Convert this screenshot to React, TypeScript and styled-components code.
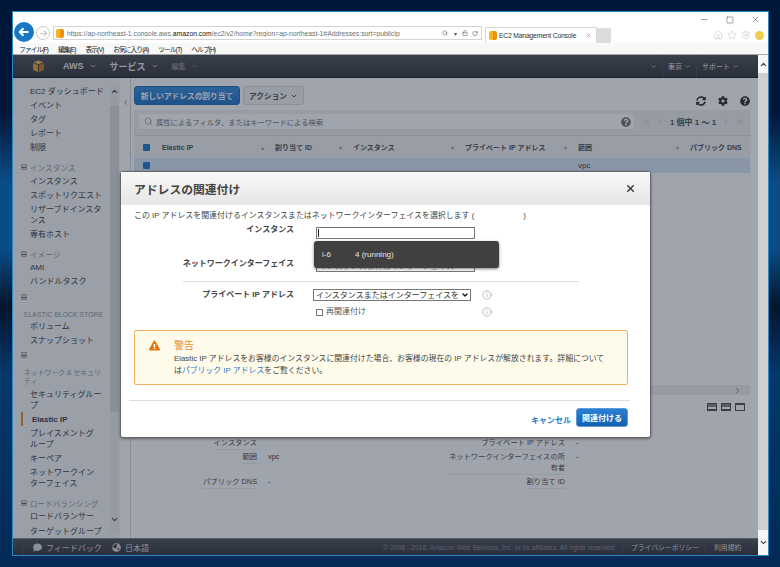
import React from 'react';
import styled, { createGlobalStyle } from 'styled-components';
import { FaCog, FaComment, FaExclamationTriangle, FaGlobeAsia, FaQuestionCircle, FaSyncAlt } from 'react-icons/fa';
import { ChevronDown, ChevronLeft, ChevronRight, ChevronUp, ChevronsLeft, ChevronsRight, Home, Info, Lock, Minus, RotateCw, Search, Settings, Square, Star, X } from 'lucide-react';

const GlobalStyle = createGlobalStyle`
  html, body { margin: 0; padding: 0; width: 780px; height: 567px; overflow: hidden; }
  * { box-sizing: border-box; }
  body { font-family: "Liberation Sans", "Noto Sans CJK JP", sans-serif; font-size: 8px; color: #444; }
`;

const Desktop = styled.div`
  width: 780px;
  height: 567px;
  padding: 12px 12px 12px 13px;
  background: linear-gradient(#02183a 0%, #02183a 20%, #0a4c86 32%, #0a4c86 44%, #04152c 54%, #05386c 66%, #012a55 100%);
`;

const BrowserWindow = styled.div`
  width: 755px;
  height: 543px;
  display: flex;
  flex-direction: column;
  background: #fff;
  box-shadow: 0 0 0 1px #2b86c5;
`;

const ChromeTop = styled.div`
  height: 31px;
  display: flex;
  align-items: flex-end;
  background: #fff;
  flex-shrink: 0;
`;

const BackButton = styled.div`
  width: 20px;
  height: 20px;
  margin: 0 0 0 1px;
  position: relative;
  top: -1px;
  border-radius: 50%;
  background: #1a78c2;
  color: #fff;
  display: flex;
  align-items: center;
  justify-content: center;
`;

const ForwardButton = styled.div`
  width: 14px;
  height: 14px;
  margin: 0 3px 3px 2px;
  border-radius: 50%;
  border: 1px solid #c8c8c8;
  color: #c4c4c4;
  display: flex;
  align-items: center;
  justify-content: center;
`;

const AddressBar = styled.div`
  width: 429px;
  height: 14px;
  margin-bottom: 3px;
  padding: 0 3px 0 2px;
  display: flex;
  align-items: center;
  gap: 3px;
  border: 1px solid #d4d4d4;
  color: #555;
`;

const Url = styled.div`
  flex: 1;
  font-size: 6.8px;
  white-space: nowrap;
  overflow: hidden;
  color: #6f6f6f;
  b { font-weight: 400; color: #111; }
`;

const AddressTool = styled.span`
  width: 6px;
  margin-left: 1px;
  display: flex;
  align-items: center;
  justify-content: center;
  color: #555;
  font-size: 6px;
`;

const Favicon = styled.span`
  width: 8px;
  height: 9px;
  flex-shrink: 0;
  border-radius: 2px;
  background: linear-gradient(90deg, #f7b21e 50%, #e8920f 50%);
`;

const Tab = styled.div`
  width: 112px;
  height: 16px;
  margin-left: 3px;
  padding: 0 4px 0 3px;
  display: flex;
  align-items: center;
  gap: 2px;
  border: 1px solid #d8d8d8;
  border-bottom: none;
  color: #333;
  font-size: 6.8px;
  letter-spacing: -0.2px;
`;

const TabTitle = styled.span`
  flex: 1;
  white-space: nowrap;
`;

const NewTab = styled.div`
  width: 14px;
  height: 15px;
  background: #dcdcdc;
`;

const ChromeRight = styled.div`
  flex: 1;
  align-self: stretch;
  display: flex;
  flex-direction: column;
  align-items: flex-end;
  justify-content: space-between;
  padding: 3px 4px 3px 0;
`;

const WindowControls = styled.div`
  display: flex;
  align-items: center;
  gap: 17px;
  padding-right: 4px;
  color: #222;
`;

const BrowserIcons = styled.div`
  display: flex;
  align-items: center;
  gap: 4px;
  color: #aab0b6;
`;

const Smiley = styled.span`
  width: 9px;
  height: 9px;
  border-radius: 50%;
  background: #f2cc4a;
`;

const MenuBar = styled.div`
  height: 12px;
  flex-shrink: 0;
  display: flex;
  align-items: center;
  gap: 10px;
  padding-left: 6px;
  font-size: 6.8px;
  letter-spacing: -1px;
  color: #222;
  background: #f8f8f8;
  border-bottom: 1px solid #a8a8a8;
`;

const AppRow = styled.div`
  flex: 1;
  min-height: 0;
  display: flex;
`;

const AppArea = styled.div`
  position: relative;
  width: 745px;
  display: flex;
  flex-direction: column;
`;

const PageScroll = styled.div`
  flex: 1;
  display: flex;
  flex-direction: column;
  justify-content: space-between;
  align-items: center;
  background: #d0d0d0;
  color: #444;
`;

const ScrollArrow = styled.div<{ $height: number }>`
  width: 100%;
  height: ${p => p.$height}px;
  display: flex;
  align-items: center;
  justify-content: center;
  background: #f6f6f6;
`;

const NavBar = styled.div`
  height: 23px;
  flex-shrink: 0;
  padding-right: 14px;
  display: flex;
  align-items: center;
  color: #ddd;
  background: linear-gradient(#55585e, #3a3c42);
  border-bottom: 1px solid #222;
`;

const NavLogo = styled.div`
  width: 37px;
  padding-left: 19px;
  display: flex;
`;

const NavItem = styled.div<{ $dim?: boolean; $size?: number }>`
  display: flex;
  align-items: center;
  gap: 5px;
  height: 23px;
  padding-left: 13px;
  font-size: ${p => p.$size || 9}px;
  font-weight: 700;
  color: ${p => (p.$dim ? '#8c8f96' : '#e8e8e8')};
`;

const NavSpacer = styled.div`
  flex: 1;
`;

const NavRightItem = styled(NavItem)<{ $plain?: boolean }>`
  font-weight: 400;
  padding-left: 5px;
  padding-right: 5px;
  gap: 2px;
  font-size: 7px;
  border-left: ${p => (p.$plain ? 'none' : '1px solid #4c4f56')};
`;

const ContentRow = styled.div`
  flex: 1;
  min-height: 0;
  display: flex;
  background: #f6f6f6;
`;

const Sidebar = styled.div`
  width: 107px;
  flex-shrink: 0;
  display: flex;
  position: relative;
  background: #f6f7f8;
  overflow: hidden;
`;

const SideNav = styled.div`
  width: 97px;
  padding: 6px 0 0 0;
  flex-shrink: 0;
`;

const SideItem = styled.div<{ $active?: boolean }>`
  margin-left: ${p => (p.$active ? '8px' : '17px')};
  padding: 1.6px 0 1.6px ${p => (p.$active ? '9px' : '0')};
  width: ${p => (p.$active ? '86px' : '75px')};
  line-height: 11px;
  font-weight: ${p => (p.$active ? 700 : 400)};
  color: #444;
  border-left: ${p => (p.$active ? '2px solid #e8912d' : 'none')};
`;

const SideHead = styled.div<{ $bare?: boolean }>`
  margin: ${p => (p.$bare ? '3px' : '6px')} 0 0 8px;
  height: ${p => (p.$bare ? '10px' : '13px')};
  display: flex;
  align-items: center;
  gap: 3px;
  color: #999;
  font-size: 7.6px;
`;

const SideBlockLabel = styled.div`
  margin: 7.5px 0 0 11px;
  width: 80px;
  line-height: 9.5px;
  color: #999;
  font-size: 6.85px;
`;

const Collapse = styled.span`
  width: 6px;
  height: 6px;
  flex-shrink: 0;
  border: 1px solid #aaa;
  border-radius: 1px;
  background: #ddd;
  display: flex;
  align-items: center;
  justify-content: center;
  &::after { content: ''; width: 4px; height: 1px; background: #666; }
`;

const SideTrack = styled.div`
  width: 9px;
  margin-top: 9px;
  height: 445px;
  display: flex;
  flex-direction: column;
  background: #eee;
  color: #555;
`;

const SideThumb = styled.div`
  height: 306px;
  margin-top: 9px;
  background: #dcdcde;
`;

const SideTrackEnd = styled.div`
  margin-top: auto;
  margin-bottom: 8px;
  height: 9px;
  display: flex;
  justify-content: center;
`;

const SideTrackStart = styled.div`
  height: 10px;
  display: flex;
  justify-content: center;
`;

const Main = styled.div`
  flex: 1;
  min-width: 0;
  display: flex;
  background: #fff;
`;

const CollapseRail = styled.div`
  width: 11px;
  flex-shrink: 0;
  padding-top: 21px;
  background: #fff;
  border-right: 1px solid #d8d8d8;
  color: #777;
  display: flex;
  justify-content: center;
  align-items: flex-start;
`;

const MainColumn = styled.div`
  flex: 1;
  min-width: 0;
  overflow: hidden;
  padding: 8px 8px 0 3px;
  display: flex;
  flex-direction: column;
`;

const Toolbar = styled.div`
  height: 19px;
  flex-shrink: 0;
  display: flex;
  align-items: center;
  gap: 3px;
`;

const PrimaryButton = styled.button`
  width: 106px;
  height: 19px;
  padding: 0;
  border: 1px solid #2a74c0;
  border-radius: 3px;
  background: linear-gradient(#3b92e0, #2a76c8);
  color: #fff;
  font: 700 7.7px "Liberation Sans", "Noto Sans CJK JP", sans-serif;
`;

const ActionButton = styled.button`
  width: 61px;
  height: 19px;
  padding: 0;
  display: flex;
  align-items: center;
  justify-content: center;
  gap: 3px;
  border: 1px solid #ddd;
  border-radius: 3px;
  background: #f4f4f4;
  color: #555;
  font: 700 7.7px "Liberation Sans", "Noto Sans CJK JP", sans-serif;
`;

const ToolIcons = styled.div`
  margin-left: auto;
  display: flex;
  align-items: center;
  gap: 12px;
  padding-top: 10px;
  color: #333;
`;

const FilterBar = styled.div`
  height: 25px;
  flex-shrink: 0;
  margin-top: 5px;
  padding: 4px 0 0 5px;
  display: flex;
  align-items: flex-start;
  background: #f0f0f0;
`;

const FilterInput = styled.div`
  width: 495px;
  height: 15px;
  padding: 0 3px 0 5px;
  display: flex;
  align-items: center;
  gap: 3px;
  font-size: 7.3px;
  background: #fff;
  color: #777;
  border-radius: 2px;
`;

const FilterHelp = styled.span`
  margin-left: auto;
  display: flex;
  color: #777;
`;

const Pager = styled.div`
  flex: 1;
  height: 15px;
  display: flex;
  align-items: center;
  justify-content: space-between;
  padding: 0 6px 0 8px;
  font-weight: 700;
  color: #555;
`;

const PagerArrow = styled.span`
  display: flex;
  color: #bbb;
`;

const TableHead = styled.div`
  height: 23px;
  flex-shrink: 0;
  display: flex;
  align-items: center;
  background: #f4f4f4;
  border-top: 1px solid #ddd;
  font-size: 7px;
  font-weight: 700;
  color: #555;
`;

const HeadCell = styled.div<{ $width: number; $mark?: string }>`
  width: ${p => p.$width}px;
  flex-shrink: 0;
  height: 23px;
  padding: 0 7px 0 4px;
  display: flex;
  align-items: center;
  justify-content: space-between;
  white-space: nowrap;
  &::after { content: '${p => p.$mark ?? '▾'}'; font-size: 6px; color: #999; font-weight: 400; }
`;

const CheckCell = styled.div`
  width: 24px;
  flex-shrink: 0;
  display: flex;
  justify-content: center;
`;

const BlueCheck = styled.span`
  width: 7px;
  height: 7px;
  border-radius: 1px;
  background: #2c7cd0;
`;

const TableRow = styled.div`
  height: 15px;
  flex-shrink: 0;
  display: flex;
  align-items: center;
  background: #d9e8f7;
`;

const RowCell = styled.div`
  margin-left: 420px;
  color: #444;
`;

const TableBody = styled.div`
  height: 212px;
  flex-shrink: 0;
  background: #fff;
`;

const HScroll = styled.div`
  height: 10px;
  flex-shrink: 0;
  padding-right: 8px;
  display: flex;
  justify-content: flex-end;
  align-items: center;
  background: #eee;
  color: #666;
`;

const PanelButtons = styled.div`
  height: 41px;
  flex-shrink: 0;
  padding: 8px 5px 0 0;
  display: flex;
  justify-content: flex-end;
  align-items: flex-start;
  gap: 4px;
`;

const PanelIcon = styled.span<{ $top?: boolean }>`
  width: 10px;
  height: 8px;
  border: 1px solid #555;
  ${p => (p.$top
    ? 'border-top-width: 2px; background: #fff;'
    : 'border-bottom-width: 2px; background: linear-gradient(#888 55%, #fff 55%);')}
`;

const DetailGrid = styled.div`
  display: grid;
  grid-template-columns: 123px 166px 120px 1fr;
  column-gap: 11px;
  align-items: start;
  font-size: 7.3px;
`;

const DetailLabel = styled.div`
  justify-self: end;
  text-align: right;
  line-height: 11px;
  padding: 1px 0;
  color: #555;
  border-bottom: 1px solid #eee;
`;

const DetailValue = styled.div`
  line-height: 13px;
  color: #444;
`;

const Footer = styled.div`
  height: 17px;
  flex-shrink: 0;
  padding: 0 12px 0 10px;
  display: flex;
  align-items: center;
  color: #ddd;
  background: linear-gradient(#55585e, #3a3c42);
  border-top: 1px solid #888;
`;

const FooterItem = styled.div<{ $width: number; $pad?: number; $size?: number }>`
  width: ${p => p.$width}px;
  flex-shrink: 0;
  height: 100%;
  padding-left: ${p => p.$pad ?? 7}px;
  display: flex;
  align-items: center;
  gap: 4px;
  white-space: nowrap;
  font-size: ${p => p.$size || 8}px;
  border-left: 1px solid #4c4f56;
  border-right: 1px solid #4c4f56;
  margin-right: -1px;
`;

const Copyright = styled.div`
  flex: 1;
  text-align: right;
  padding-right: 7px;
  font-size: 6.8px;
  white-space: nowrap;
  color: #8d9096;
`;

const Scrim = styled.div`
  position: absolute;
  inset: 0;
  background: rgba(17, 27, 47, 0.4);
`;

const Modal = styled.div`
  position: absolute;
  left: 107px;
  top: 116px;
  width: 531px;
  height: 267px;
  display: flex;
  flex-direction: column;
  background: #fff;
  border: 1px solid #666;
  border-radius: 3px;
  box-shadow: 0 1px 3px rgba(0, 0, 0, 0.4);
`;

const ModalHeader = styled.div`
  height: 33px;
  flex-shrink: 0;
  padding: 0 14px 0 13px;
  display: flex;
  align-items: center;
  justify-content: space-between;
  background: linear-gradient(#f8f8f8, #e6e6e6);
  color: #333;
`;

const ModalTitle = styled.h2`
  margin: 0;
  font-size: 11.8px;
  font-weight: 700;
  color: #444;
`;

const ModalBody = styled.div`
  padding: 5px 22px 0 13px;
`;

const IntroLine = styled.div`
  line-height: 12px;
  font-size: 7.93px;
  color: #444;
  white-space: nowrap;
`;

const Blank = styled.span`
  display: inline-block;
  width: 49px;
`;

const FormRow = styled.div<{ $height: number; $top?: number }>`
  display: grid;
  grid-template-columns: 160px auto 1fr;
  column-gap: 22px;
  margin-top: ${p => p.$top || 0}px;
  height: ${p => p.$height}px;
`;

const FormLabel = styled.div`
  text-align: right;
  line-height: 12px;
  font-weight: 700;
  color: #444;
`;

const FieldWrap = styled.div<{ $top?: number }>`
  position: relative;
  margin-top: ${p => p.$top || 0}px;
`;

const TextField = styled.input`
  display: block;
  width: 159px;
  height: 12px;
  padding: 0 2px;
  border: 1px solid #777;
  background: #fff;
  font: 8px "Liberation Sans", "Noto Sans CJK JP", sans-serif;
  &::placeholder { color: #999; }
`;

const Caret = styled.span`
  position: absolute;
  left: 2px;
  top: 2px;
  width: 1px;
  height: 8px;
  background: #222;
`;

const SuggestMenu = styled.div`
  position: absolute;
  left: -2px;
  top: 14px;
  width: 185px;
  height: 27px;
  padding-left: 8px;
  display: flex;
  align-items: center;
  border-radius: 3px;
  background: #404040;
  box-shadow: 0 1px 3px rgba(0, 0, 0, 0.5);
  color: #e4e4e4;
  z-index: 2;
`;

const SuggestId = styled.span`
  width: 33px;
`;

const Rule = styled.div`
  width: 396px;
  height: 1px;
  margin: 9px 0 0 49px;
  background: #ddd;
`;

const SelectField = styled.select`
  display: block;
  width: 158px;
  height: 12px;
  margin-left: -3px;
  padding: 0 11px 0 2px;
  appearance: none;
  border: 1px solid #777;
  border-radius: 0;
  background: #fff;
  color: #333;
  font: 8px "Liberation Sans", "Noto Sans CJK JP", sans-serif;
`;

const SelectArrow = styled.span`
  position: absolute;
  left: 145px;
  top: 2px;
  display: flex;
  color: #111;
  pointer-events: none;
`;

const InfoMark = styled.span`
  display: flex;
  align-items: center;
  margin-left: -11px;
  color: #777;
`;

const CheckLabel = styled.label`
  width: 155px;
  display: flex;
  align-items: center;
  gap: 3px;
  line-height: 12px;
  color: #555;
`;

const CheckBox = styled.span`
  width: 7px;
  height: 7px;
  border: 1px solid #777;
  background: #fff;
`;

const Alert = styled.div`
  margin-top: 12px;
  height: 55px;
  padding: 9px 10px 0 14px;
  display: flex;
  gap: 14px;
  border: 1px solid #f2b064;
  border-radius: 2px;
  background: #fffbeb;
`;

const AlertIcon = styled.div`
  color: #e47911;
  display: flex;
  align-items: flex-start;
`;

const AlertTitle = styled.div`
  font-size: 10px;
  line-height: 12px;
  color: #e8912d;
`;

const AlertText = styled.div`
  width: 434px;
  margin-top: 1px;
  line-height: 11.5px;
  font-size: 7.87px;
  color: #444;
  a { color: #2b7bc9; text-decoration: none; }
`;

const ModalRule = styled.div`
  height: 1px;
  margin: 15px 20px 0 8px;
  background: #ddd;
`;

const ModalFooter = styled.div`
  margin-top: 7px;
  padding-right: 22px;
  display: flex;
  align-items: center;
  justify-content: flex-end;
  gap: 5px;
`;

const CancelLink = styled.a`
  padding-top: 3px;
  color: #2b7bc9;
  font-weight: 700;
`;

const ConfirmButton = styled.button`
  width: 52px;
  height: 19px;
  padding: 0;
  border: 1px solid #5a9bdc;
  border-radius: 3px;
  background: linear-gradient(#2a7fd4, #1561b0);
  color: #fff;
  font: 700 8px "Liberation Sans", "Noto Sans CJK JP", sans-serif;
`;

const AwsCube = () => (
  <svg width="13" height="13" viewBox="0 0 13 13">
    <path d="M1 3l5 2v7L1 10z" fill="#e8a33a" />
    <path d="M12 3L7 5v7l5-2z" fill="#c27f1e" />
    <path d="M1.6 2.3L6.5.6l4.9 1.7-4.9 1.9z" fill="#f0bd63" />
  </svg>
);

const ArrowLeftIcon = () => (
  <svg width="12" height="12" viewBox="0 0 12 12">
    <path d="M10.5 6H2M5.5 2.2L1.8 6l3.7 3.8" fill="none" stroke="#fff" strokeWidth="2" />
  </svg>
);

const ArrowRightIcon = () => (
  <svg width="9" height="9" viewBox="0 0 12 12">
    <path d="M1.5 6H10M6.5 2.2L10.2 6l-3.7 3.8" fill="none" stroke="currentColor" strokeWidth="1.4" />
  </svg>
);

const MiniInfo = () => <Info size={10} strokeWidth={1.2} />;

const sideBlocks = (
  <SideNav>
    <SideItem>EC2 ダッシュボード</SideItem>
    <SideItem>イベント</SideItem>
    <SideItem>タグ</SideItem>
    <SideItem>レポート</SideItem>
    <SideItem>制限</SideItem>
    <SideHead><Collapse />インスタンス</SideHead>
    <SideItem>インスタンス</SideItem>
    <SideItem>スポットリクエスト</SideItem>
    <SideItem>リザーブドインスタンス</SideItem>
    <SideItem>専有ホスト</SideItem>
    <SideHead><Collapse />イメージ</SideHead>
    <SideItem>AMI</SideItem>
    <SideItem>バンドルタスク</SideItem>
    <SideHead $bare><Collapse /></SideHead>
    <SideBlockLabel>ELASTIC BLOCK STORE</SideBlockLabel>
    <SideItem>ボリューム</SideItem>
    <SideItem>スナップショット</SideItem>
    <SideHead $bare><Collapse /></SideHead>
    <SideBlockLabel>ネットワーク &amp; セキュリティ</SideBlockLabel>
    <SideItem>セキュリティグループ</SideItem>
    <SideItem $active>Elastic IP</SideItem>
    <SideItem>プレイスメントグ<br />ループ</SideItem>
    <SideItem>キーペア</SideItem>
    <SideItem>ネットワークイン<br />ターフェイス</SideItem>
    <SideHead><Collapse />ロードバランシング</SideHead>
    <SideItem>ロードバランサー</SideItem>
    <SideItem>ターゲットグループ</SideItem>
  </SideNav>
);

export default function App() {
  return (
    <Desktop>
      <GlobalStyle />
      <BrowserWindow>
        <ChromeTop>
          <BackButton><ArrowLeftIcon /></BackButton>
          <ForwardButton><ArrowRightIcon /></ForwardButton>
          <AddressBar>
            <Favicon />
            <Url>https://ap-northeast-1.console.aws.<b>amazon.com</b>/ec2/v2/home?region=ap-northeast-1#Addresses:sort=publicIp</Url>
            <AddressTool><Search size={8} /></AddressTool>
            <AddressTool>▾</AddressTool>
            <AddressTool><Lock size={8} /></AddressTool>
            <AddressTool><RotateCw size={7} /></AddressTool>
          </AddressBar>
          <Tab>
            <Favicon />
            <TabTitle>EC2 Management Console</TabTitle>
            <X size={7} color="#888" />
          </Tab>
          <NewTab />
          <ChromeRight>
            <WindowControls>
              <Minus size={9} strokeWidth={1.2} />
              <Square size={8} strokeWidth={1.2} />
              <X size={9} strokeWidth={1.2} />
            </WindowControls>
            <BrowserIcons>
              <Home size={10} strokeWidth={1} />
              <Star size={10} strokeWidth={1} />
              <Settings size={10} strokeWidth={1} />
              <Smiley />
            </BrowserIcons>
          </ChromeRight>
        </ChromeTop>
        <MenuBar>
          <span>ファイル(F)</span>
          <span>編集(E)</span>
          <span>表示(V)</span>
          <span>お気に入り(A)</span>
          <span>ツール(T)</span>
          <span>ヘルプ(H)</span>
        </MenuBar>
        <AppRow>
          <AppArea>
            <NavBar>
              <NavLogo><AwsCube /></NavLogo>
              <NavItem>AWS <ChevronDown size={8} /></NavItem>
              <NavItem>サービス <ChevronDown size={8} /></NavItem>
              <NavItem $dim $size={7}>編集 <ChevronDown size={8} /></NavItem>
              <NavSpacer />
              <NavRightItem $plain><ChevronDown size={7} /></NavRightItem>
              <NavRightItem>東京<ChevronDown size={7} /></NavRightItem>
              <NavRightItem>サポート<ChevronDown size={7} /></NavRightItem>
            </NavBar>
            <ContentRow>
              <Sidebar>
                {sideBlocks}
                <SideTrack>
                  <SideTrackStart><ChevronUp size={9} strokeWidth={3} /></SideTrackStart>
                  <SideThumb />
                  <SideTrackEnd><ChevronDown size={9} strokeWidth={3} /></SideTrackEnd>
                </SideTrack>
              </Sidebar>
              <Main>
                <CollapseRail><ChevronLeft size={7} strokeWidth={3} /></CollapseRail>
                <MainColumn>
                  <Toolbar>
                    <PrimaryButton>新しいアドレスの割り当て</PrimaryButton>
                    <ActionButton>アクション <ChevronDown size={8} strokeWidth={3} /></ActionButton>
                    <ToolIcons>
                      <FaSyncAlt size={10} />
                      <FaCog size={10} />
                      <FaQuestionCircle size={10} />
                    </ToolIcons>
                  </Toolbar>
                  <FilterBar>
                    <FilterInput>
                      <Search size={9} strokeWidth={1.5} />
                      属性によるフィルタ、またはキーワードによる検索
                      <FilterHelp><FaQuestionCircle size={10} /></FilterHelp>
                    </FilterInput>
                    <Pager>
                      <PagerArrow><ChevronsLeft size={9} /></PagerArrow>
                      <PagerArrow><ChevronLeft size={9} /></PagerArrow>
                      1 個中 1 ～ 1
                      <PagerArrow><ChevronRight size={9} /></PagerArrow>
                      <PagerArrow><ChevronsRight size={9} /></PagerArrow>
                    </Pager>
                  </FilterBar>
                  <TableHead>
                    <CheckCell><BlueCheck /></CheckCell>
                    <HeadCell $width={113} $mark="▴">Elastic IP</HeadCell>
                    <HeadCell $width={78}>割り当て ID</HeadCell>
                    <HeadCell $width={112}>インスタンス</HeadCell>
                    <HeadCell $width={113}>プライベート IP アドレス</HeadCell>
                    <HeadCell $width={112}>範囲</HeadCell>
                    <HeadCell $width={64} $mark="">パブリック DNS</HeadCell>
                  </TableHead>
                  <TableRow>
                    <CheckCell><BlueCheck /></CheckCell>
                    <RowCell>vpc</RowCell>
                  </TableRow>
                  <TableBody />
                  <HScroll><ChevronRight size={9} /></HScroll>
                  <PanelButtons>
                    <PanelIcon />
                    <PanelIcon />
                    <PanelIcon $top />
                  </PanelButtons>
                  <DetailGrid>
                    <DetailLabel>インスタンス</DetailLabel>
                    <DetailValue />
                    <DetailLabel>プライベート IP アドレス</DetailLabel>
                    <DetailValue>-</DetailValue>
                    <DetailLabel>範囲</DetailLabel>
                    <DetailValue>vpc</DetailValue>
                    <DetailLabel>ネットワークインターフェイスの所有者</DetailLabel>
                    <DetailValue>-</DetailValue>
                    <DetailLabel>パブリック DNS</DetailLabel>
                    <DetailValue>-</DetailValue>
                    <DetailLabel>割り当て ID</DetailLabel>
                    <DetailValue />
                  </DetailGrid>
                </MainColumn>
              </Main>
            </ContentRow>
            <Footer>
              <FooterItem $width={83} $pad={9}><FaComment size={9} /> フィードバック</FooterItem>
              <FooterItem $width={50} $pad={6}><FaGlobeAsia size={9} /> 日本語</FooterItem>
              <Copyright>© 2008 - 2016, Amazon Web Services, Inc. or its affiliates. All rights reserved.</Copyright>
              <FooterItem $width={82} $size={6.8}>プライバシーポリシー</FooterItem>
              <FooterItem $width={43} $pad={9} $size={6.8}>利用規約</FooterItem>
            </Footer>
            <Scrim />
            <Modal>
              <ModalHeader>
                <ModalTitle>アドレスの関連付け</ModalTitle>
                <X size={11} strokeWidth={3} />
              </ModalHeader>
              <ModalBody>
                <IntroLine>この IP アドレスを関連付けるインスタンスまたはネットワークインターフェイスを選択します (<Blank />)</IntroLine>
                <FormRow $top={2} $height={34}>
                  <FormLabel>インスタンス</FormLabel>
                  <FieldWrap $top={3}>
                    <TextField />
                    <Caret />
                    <SuggestMenu>
                      <SuggestId>i-6</SuggestId>4 (running)
                    </SuggestMenu>
                  </FieldWrap>
                </FormRow>
                <FormRow $height={14}>
                  <FormLabel>ネットワークインターフェイス</FormLabel>
                  <FieldWrap $top={2}>
                    <TextField placeholder="インスタンスまたはインターフェイス" />
                  </FieldWrap>
                </FormRow>
                <Rule />
                <FormRow $top={7} $height={12}>
                  <FormLabel>プライベート IP アドレス</FormLabel>
                  <FieldWrap>
                    <SelectField defaultValue="none">
                      <option value="none">インスタンスまたはインターフェイスを選択してください</option>
                    </SelectField>
                    <SelectArrow><ChevronDown size={8} strokeWidth={4} /></SelectArrow>
                  </FieldWrap>
                  <InfoMark><MiniInfo /></InfoMark>
                </FormRow>
                <FormRow $top={5} $height={12}>
                  <div />
                  <CheckLabel><CheckBox />再関連付け</CheckLabel>
                  <InfoMark><MiniInfo /></InfoMark>
                </FormRow>
                <Alert>
                  <AlertIcon><FaExclamationTriangle size={11} /></AlertIcon>
                  <div>
                    <AlertTitle>警告</AlertTitle>
                    <AlertText>Elastic IP アドレスをお客様のインスタンスに関連付けた場合、お客様の現在の IP アドレスが解放されます。詳細については<a href="#ip">パブリック IP アドレス</a>をご覧ください。</AlertText>
                  </div>
                </Alert>
              </ModalBody>
              <ModalRule />
              <ModalFooter>
                <CancelLink>キャンセル</CancelLink>
                <ConfirmButton>関連付ける</ConfirmButton>
              </ModalFooter>
            </Modal>
          </AppArea>
          <PageScroll>
            <ScrollArrow $height={18}><ChevronUp size={9} strokeWidth={3} /></ScrollArrow>
            <ScrollArrow $height={25}><ChevronDown size={9} strokeWidth={3} /></ScrollArrow>
          </PageScroll>
        </AppRow>
      </BrowserWindow>
    </Desktop>
  );
}
